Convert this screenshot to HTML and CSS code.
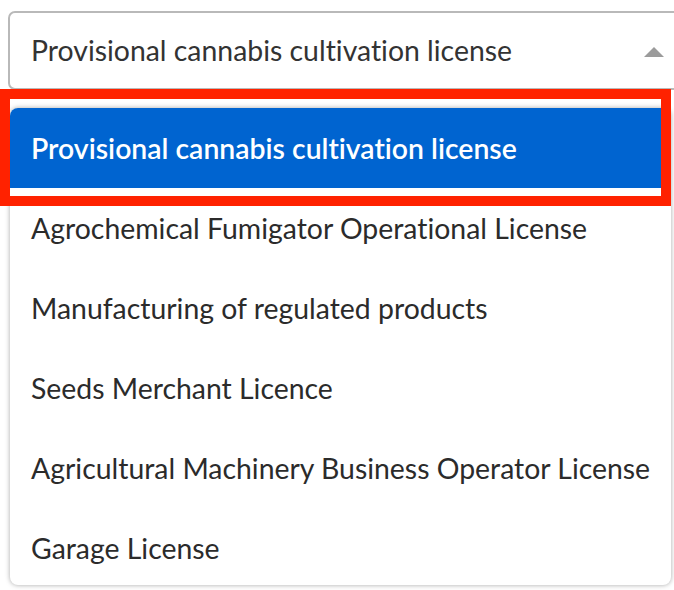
FILE: index.html
```html
<!DOCTYPE html>
<html>
<head>
<meta charset="utf-8">
<link rel="stylesheet" href="styles.css">
</head>
<body>
<div class="page">
  <div class="select">
    <span class="select-value">Provisional cannabis cultivation license</span>
    <svg class="arrow" width="20" height="10" viewBox="0 0 20 10"><polygon points="0,10 10,0 20,10" fill="#9b9b9b"/></svg>
  </div>
  <ul class="menu">
    <li class="option active">Provisional cannabis cultivation license</li>
    <li class="option">Agrochemical Fumigator Operational License</li>
    <li class="option">Manufacturing of regulated products</li>
    <li class="option">Seeds Merchant Licence</li>
    <li class="option">Agricultural Machinery Business Operator License</li>
    <li class="option">Garage License</li>
  </ul>
  <div class="highlight"></div>
</div>
</body>
</html>
```
FILE: styles.css
```css
html, body {
  margin: 0;
  padding: 0;
  background: #ffffff;
}
.page {
  position: relative;
  width: 674px;
  height: 590px;
  overflow: hidden;
  font-family: "Lato", "Noto Sans", sans-serif;
  font-variant-ligatures: none;
  font-feature-settings: "liga" 0;
  color: #2e2e2e;
}
.select {
  margin: 11px 0 0 8px;
  width: 690px;
  height: 79px;
  box-sizing: border-box;
  border: 2px solid #b9b9b9;
  border-radius: 7px;
  display: flex;
  align-items: center;
  padding-left: 21px;
  padding-right: 32px;
  font-size: 28.4px;
  color: #333333;
}
.select-value {
  flex: 1;
  padding-bottom: 1px;
}
.arrow {
  display: block;
  margin-top: 2px;
}
.menu {
  position: absolute;
  top: 108px;
  left: 10px;
  width: 661px;
  height: 477px;
  margin: 0;
  padding: 0;
  list-style: none;
  background: #ffffff;
  border-radius: 8px;
  box-shadow: 0 0 5px rgba(0, 0, 0, 0.35);
  overflow: hidden;
}
.option {
  height: 80px;
  display: flex;
  align-items: center;
  padding-left: 21px;
  font-size: 28.4px;
  color: #2b2b2b;
  white-space: nowrap;
}
.option.active {
  background: #0064d0;
  color: #ffffff;
  font-weight: 600;
}
.highlight {
  position: absolute;
  left: 0;
  top: 89px;
  width: 671px;
  height: 117px;
  box-sizing: border-box;
  border: 10px solid #ff2200;
}
```
